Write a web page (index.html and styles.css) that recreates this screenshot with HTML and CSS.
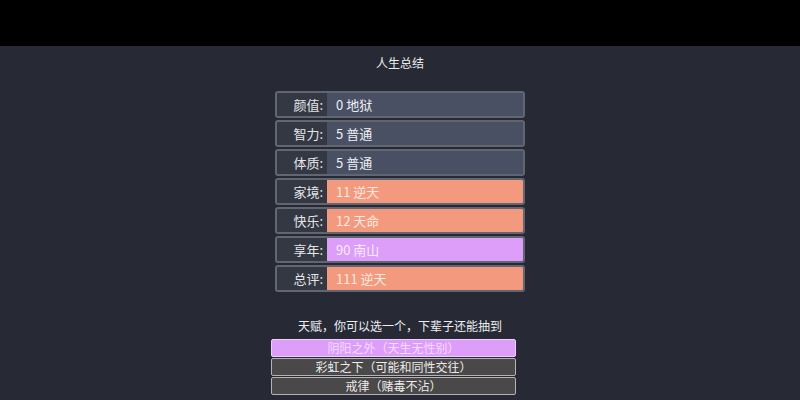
FILE: index.html
```html
<!DOCTYPE html>
<html lang="zh">
<head>
<meta charset="utf-8">
<link rel="stylesheet" href="styles.css">
</head>
<body>
<div class="topbar"></div>
<main class="page">
  <h1 class="title">人生总结</h1>
  <div class="stats">
    <div class="row"><span class="label">颜值:</span><span class="value v-normal">0 地狱</span></div>
    <div class="row"><span class="label">智力:</span><span class="value v-normal">5 普通</span></div>
    <div class="row"><span class="label">体质:</span><span class="value v-normal">5 普通</span></div>
    <div class="row"><span class="label">家境:</span><span class="value v-orange">11 逆天</span></div>
    <div class="row"><span class="label">快乐:</span><span class="value v-orange">12 天命</span></div>
    <div class="row"><span class="label">享年:</span><span class="value v-purple">90 南山</span></div>
    <div class="row"><span class="label">总评:</span><span class="value v-orange">111 逆天</span></div>
  </div>
  <p class="talent-tip">天赋，你可以选一个，下辈子还能抽到</p>
  <ul class="talents">
    <li class="talent t-purple">阴阳之外（天生无性别）</li>
    <li class="talent">彩虹之下（可能和同性交往）</li>
    <li class="talent">戒律（赌毒不沾）</li>
  </ul>
</main>
</body>
</html>
```

FILE: styles.css
```css
* { box-sizing: border-box; }
html, body {
  margin: 0;
  padding: 0;
  background: #272a35;
  font-family: "Noto Sans CJK SC", "Noto Sans", sans-serif;
  color: #e9eaee;
  height: 400px;
  overflow: hidden;
}
.topbar {
  height: 46px;
  background: #000000;
}
.page {
  display: flex;
  flex-direction: column;
  align-items: center;
}
.title {
  margin: 8px 0 0 0;
  font-size: 12px;
  font-weight: normal;
  line-height: 18px;
  color: #ececec;
}
.stats {
  margin-top: 19px;
  width: 250px;
  display: flex;
  flex-direction: column;
  gap: 2px;
}
.row {
  display: flex;
  height: 27px;
  border: 2px solid #626672;
  border-radius: 3px;
  background: #343843;
  overflow: hidden;
}
.label {
  width: 50px;
  flex: none;
  text-align: right;
  padding-right: 4px;
  font-size: 13px;
  line-height: 23px;
  color: #e4e5e9;
}
.value {
  flex: 1;
  padding-left: 9px;
  font-size: 13px;
  line-height: 23px;
}
.v-normal { background: #4a5064; color: #eef0f4; }
.v-orange { background: #f39a7e; color: #fde9e2; }
.v-purple { background: #dd9efa; color: #f9ebff; }

.talent-tip {
  margin: 25px 0 0 0;
  font-size: 12px;
  line-height: 18px;
  color: #eceef2;
}
.talents {
  list-style: none;
  margin: 4px 13px 0 0;
  padding: 0;
  width: 245px;
  display: flex;
  flex-direction: column;
  gap: 1px;
}
.talent {
  height: 18px;
  border: 1px solid #b4b4b4;
  border-radius: 2px;
  background: #4a4848;
  color: #ececec;
  font-size: 12px;
  line-height: 16px;
  text-align: center;
}
.t-purple {
  background: #dd9efa;
  color: #f4dcff;
  border-color: #ecd0fb;
}
```
